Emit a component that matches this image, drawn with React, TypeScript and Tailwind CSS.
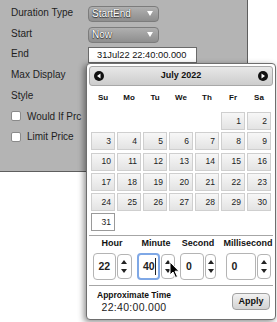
import React from "react";

const font = { fontFamily: '"Liberation Sans", Arial, sans-serif' };

const leftRows = ["Duration Type", "Start", "End", "Max Display", "Style"];

const Select: React.FC<{ value: string }> = ({ value }) => (
  <div className="flex h-[16px] w-[71px] items-center justify-between rounded-[4px] border border-[#7c7c7c] bg-linear-to-b from-[#b0b0b0] to-[#8e8e8e] pl-[3px] pr-[5px]">
    <span className="text-[10px] leading-none text-white [text-shadow:0_0_1px_#222,0_1px_1px_#333]">{value}</span>
    <svg width="6" height="5" viewBox="0 0 6 5">
      <path d="M0 0 H6 L3 5 Z" fill="#fff" />
    </svg>
  </div>
);

const Arrows: React.FC<{ w: number }> = ({ w }) => (
  <div
    className="flex h-[25px] flex-col items-center justify-center gap-[5px] rounded-[4px] border border-[#b4b4b4] bg-white"
    style={{ width: w }}
  >
    <svg width="6" height="4" viewBox="0 0 6 4">
      <path d="M3 0 L6 4 H0 Z" fill="#222" />
    </svg>
    <svg width="6" height="4" viewBox="0 0 6 4">
      <path d="M0 0 H6 L3 4 Z" fill="#222" />
    </svg>
  </div>
);

const Spinner: React.FC<{ value: string; inputW: number; arrowW: number; focus?: boolean }> = ({
  value,
  inputW,
  arrowW,
  focus,
}) => (
  <div className="flex h-[27px] items-center gap-[1px]">
    <div
      className={
        focus
          ? "flex h-[27px] items-center rounded-[4px] border-2 border-[#7fa8e6] bg-white pl-[4px] text-[10.5px] text-[#222]"
          : "flex h-[27px] items-center rounded-[4px] border border-[#b4b4b4] bg-white pl-[5px] text-[10.5px] text-[#222]"
      }
      style={{ width: inputW }}
    >
      {value}
      {focus && <span className="ml-[0.5px] h-[17px] w-px bg-[#222]" />}
    </div>
    <Arrows w={arrowW} />
  </div>
);

const days: (number | null)[] = [null, null, null, null, null, 1, 2];
for (let d = 3; d <= 31; d++) days.push(d);

const App: React.FC = () => {
  return (
    <div className="relative h-[322px] w-[277px] overflow-hidden bg-white" style={font}>
      {/* settings panel */}
      <div className="h-[172px] w-[248px] border-r border-b border-[#5e5e5e] bg-[#b4b4b4] px-[11px] pt-[2px] text-[10px] text-[#1e1e1e]">
        {leftRows.map((label, i) => (
          <div key={label} className="flex h-[20.75px] items-center">
            <span className="w-[77px]">{label}</span>
            <div className="pt-[3px]">
              {i === 0 && <Select value="StartEnd" />}
              {i === 1 && <Select value="Now" />}
              {i === 2 && (
                <div className="flex h-[16px] w-[109px] items-center border border-[#6a6a6a] bg-white pl-[8px] text-[9.3px] leading-none text-[#111]">
                  31Jul22 22:40:00.000
                </div>
              )}
            </div>
          </div>
        ))}
        {["Would If Prc", "Limit Price"].map((label) => (
          <div key={label} className="flex h-[20.75px] items-center gap-[6px]">
            <span className="h-[10px] w-[10px] rounded-[2px] border border-[#8a8a8a] bg-white" />
            <span>{label}</span>
          </div>
        ))}
      </div>

      {/* date picker popup */}
      <div className="absolute left-[86px] top-[63px] flex h-[257px] w-[190px] flex-col rounded-[4px] border border-[#6e6e6e] bg-white p-[2px] shadow-[-2px_2px_6px_rgba(0,0,0,0.45)]">
        <div className="flex h-[20px] items-center justify-between rounded-[3px] border border-[#a8a8a8] bg-linear-to-b from-[#e8e8e8] to-[#cdcdcd] px-[4px]">
          <svg width="10" height="10" viewBox="0 0 10 10">
            <circle cx="5" cy="5" r="5" fill="#111" />
            <path d="M3 5 L6.5 2.6 V7.4 Z" fill="#fff" />
          </svg>
          <span className="text-[9px] font-bold text-[#111]">July 2022</span>
          <svg width="10" height="10" viewBox="0 0 10 10">
            <circle cx="5" cy="5" r="5" fill="#111" />
            <path d="M7 5 L3.5 2.6 V7.4 Z" fill="#fff" />
          </svg>
        </div>

        <div className="ml-[2px] grid h-[24px] grid-cols-[repeat(7,24px)] items-center gap-x-[2px] text-[8px] font-bold text-[#111]">
          {["Su", "Mo", "Tu", "We", "Th", "Fr", "Sa"].map((d) => (
            <span key={d} className="text-center">
              {d}
            </span>
          ))}
        </div>

        <div className="ml-[2px] mt-[2px] grid grid-cols-[repeat(7,24px)] gap-x-[2px] gap-y-[2.3px]">
          {days.map((d, i) =>
            d === null ? (
              <span key={i} className="h-[18px]" />
            ) : (
              <span
                key={i}
                className={
                  d === 31
                    ? "flex h-[18px] items-center justify-end border border-[#9a9a9a] bg-white pr-[3px] text-[8.5px] text-[#222]"
                    : "flex h-[18px] items-center justify-end border border-[#cfcfcf] bg-linear-to-b from-[#f7f7f7] to-[#e3e3e3] pr-[3px] text-[8.5px] text-[#222]"
                }
              >
                {d}
              </span>
            )
          )}
        </div>

        <div className="mt-[3.5px] h-px bg-[#a6a6a6]" />

        <div className="mt-[2px] flex pl-[4px] text-[9px] font-bold text-[#111]">
          <div className="flex w-[38px] flex-col items-center">
            <span className="h-[11px] leading-[11px]">Hour</span>
            <div className="mt-[4.5px]">
              <Spinner value="22" inputW={23} arrowW={15} />
            </div>
          </div>
          <div className="ml-[6px] flex w-[38px] flex-col items-center">
            <span className="h-[11px] leading-[11px]">Minute</span>
            <div className="mt-[4.5px]">
              <Spinner value="40" inputW={23} arrowW={14} focus />
            </div>
          </div>
          <div className="ml-[5px] flex w-[36px] flex-col items-center">
            <span className="h-[11px] leading-[11px]">Second</span>
            <div className="mt-[4.5px]">
              <Spinner value="0" inputW={24} arrowW={11} />
            </div>
          </div>
          <div className="ml-[8px] flex w-[48px] flex-col items-center">
            <span className="h-[11px] leading-[11px]">Millisecond</span>
            <div className="mt-[4.5px]">
              <Spinner value="0" inputW={30} arrowW={14} />
            </div>
          </div>
        </div>

        <div className="mt-[5px] h-px bg-[#a6a6a6]" />

        <div className="flex flex-1 items-center justify-between pl-[8px] pr-[3px]">
          <div className="flex flex-col items-center">
            <span className="text-[8.5px] font-bold leading-[12px] text-[#111]">Approximate Time</span>
            <span className="text-[10.5px] leading-[13px] tracking-[0.3px] text-[#222]">22:40:00.000</span>
          </div>
          <div className="flex h-[17px] w-[38px] items-center justify-center rounded-[4px] border border-[#a0a0a0] bg-linear-to-b from-[#f2f2f2] to-[#d2d2d2] text-[9px] font-bold text-[#111]">
            Apply
          </div>
        </div>
      </div>

      {/* mouse pointer */}
      <svg className="absolute left-[169px] top-[261px]" width="12" height="18" viewBox="0 0 12 18">
        <path d="M1 1 L1 14 L4 11 L6.5 16.5 L8.5 15.6 L6 10.2 L10 10.2 Z" fill="#000" stroke="#fff" strokeWidth="1" />
      </svg>
    </div>
  );
};

export default App;
